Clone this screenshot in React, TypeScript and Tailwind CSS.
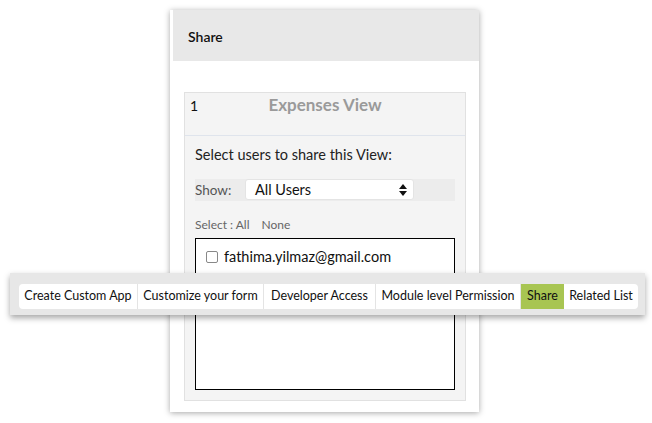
import React from 'react';

const tabs = [
  { label: 'Create Custom App', w: 'w-[119px]' },
  { label: 'Customize your form', w: 'w-[126px]' },
  { label: 'Developer Access', w: 'w-[112px]' },
  { label: 'Module level Permission', w: 'w-[145px]' },
  { label: 'Share', w: 'w-[43px]', active: true },
  { label: 'Related List', w: 'w-[74px]' },
];

const App: React.FC = () => {
  return (
    <div className="relative w-[652px] h-[423px] bg-white overflow-hidden font-['Lato','Noto_Sans',sans-serif] text-[#222]">
      {/* Share dialog */}
      <div className="ml-[170px] mt-[10px] w-[309px] h-[402px] bg-white pl-[3px] shadow-[0_1px_6px_rgba(0,0,0,0.35)]">
        <div className="h-[51px] bg-[#e8e8e8] flex items-center pl-[15px] pt-[2px] text-[14px] font-semibold text-[#111]">
          Share
        </div>
        <div className="ml-[11px] mt-[31px] w-[282px] h-[309px] bg-[#f4f4f4] border border-[#e1e1e1] flex flex-col">
          <div className="h-[43px] border-b border-[#dfe4ec] relative">
            <span className="absolute left-[5px] top-[2px] text-[14px] text-[#111]">1</span>
            <div className="text-center text-[17px] leading-[24px] font-bold text-[#9a9a9a]">Expenses View</div>
          </div>
          <div className="px-[10px] flex flex-col">
            <div className="mt-[8px] text-[14.5px] text-[#222]">Select users to share this View:</div>
            <div className="mt-[13px] h-[22px] bg-[#ececec] flex items-center">
              <span className="text-[13.5px] text-[#555] w-[50px]">Show:</span>
              <div className="w-[169px] h-[21px] bg-white rounded-[3px] border border-[#e4e4e4] flex items-center justify-between pl-[9px] pr-[6px]">
                <span className="text-[14.5px] text-[#111]">All Users</span>
                <svg width="8" height="12" viewBox="0 0 8 12">
                  <path d="M4 0 L8 5 L0 5 Z" fill="#111" />
                  <path d="M0 7 L8 7 L4 12 Z" fill="#111" />
                </svg>
              </div>
            </div>
            <div className="mt-[15px] text-[12px] text-[#666] flex gap-[12px]">
              <span>Select : All</span>
              <span>None</span>
            </div>
            <div className="mt-[4px] h-[152px] bg-white border border-black pt-[7px] pl-[10px]">
              <label className="flex items-center gap-[6px] text-[14.5px] text-[#111]">
                <span className="w-[12px] h-[12px] rounded-[2px] border border-[#888] bg-white" />
                fathima.yilmaz@gmail.com
              </label>
            </div>
          </div>
        </div>
      </div>

      {/* Floating tab strip over the dialog */}
      <div className="absolute left-[10px] top-[273px] w-[635px] h-[42px] bg-[#e7e7e7] pl-[9px] pt-[11px] shadow-[0_3px_6px_rgba(0,0,0,0.35)]">
        <div className="flex h-[25px] bg-white rounded-[4px] overflow-hidden w-[619px]">
          {tabs.map((t, i) => (
            <div
              key={t.label}
              className={`${t.w} flex items-center justify-center text-[12.5px] whitespace-nowrap ${
                i < tabs.length - 1 && !t.active ? 'border-r border-[#e4e4e4]' : ''
              } ${t.active ? 'bg-[#a8c552] text-[#111]' : 'text-[#111]'}`}
            >
              {t.label}
            </div>
          ))}
        </div>
      </div>
    </div>
  );
};

export default App;
